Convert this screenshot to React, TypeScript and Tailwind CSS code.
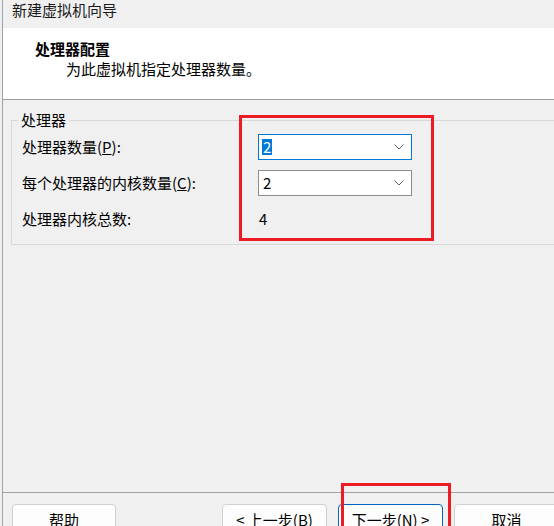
import React from "react";

const font = { fontFamily: '"Noto Sans CJK SC", "Noto Sans", sans-serif' };

function Chevron() {
  return (
    <svg width="10" height="6" viewBox="0 0 10 6" className="shrink-0">
      <polyline points="0.5,0.5 5,5 9.5,0.5" fill="none" stroke="#606060" strokeWidth="1" />
    </svg>
  );
}

function Combo({ focused }: { focused?: boolean }) {
  return (
    <div
      className={
        "flex h-[26px] w-[154px] items-center justify-between bg-white pl-[3px] pr-[7px] " +
        (focused ? "border border-[#0078d7]" : "border border-[#8c8c8c]")
      }
    >
      {focused ? (
        <span className="bg-[#0078d7] px-[1px] leading-[16px] text-white">2</span>
      ) : (
        <span className="px-[1px] leading-[16px] text-black">2</span>
      )}
      <Chevron />
    </div>
  );
}

function Btn({ children, primary, w = "w-[105px]" }: { children: React.ReactNode; primary?: boolean; w?: string }) {
  return (
    <div
      className={
        "flex h-[32px] shrink-0 items-center justify-center rounded-[4px] bg-[#fdfdfd] text-black " +
        w +
        (primary ? " border border-[#0067c0]" : " border border-[#d0d0d0]")
      }
    >
      {children}
    </div>
  );
}

export default function App() {
  return (
    <div className="relative h-[526px] w-[554px] overflow-hidden bg-[#f0f0f0] pl-[2px] text-[15px] text-black" style={font}>
      <div className="flex h-full flex-col border-l border-[#a0a0a0]">
        <div className="h-[28px] shrink-0 pl-[9px] leading-[20px] text-[#1a1a1a]">新建虚拟机向导</div>
        <div className="h-[72px] shrink-0 border-b border-[#a0a0a0] bg-white pt-[11px]">
          <div className="pl-[32px] font-bold leading-[20px]">处理器配置</div>
          <div className="pl-[63px] leading-[20px]">为此虚拟机指定处理器数量。</div>
        </div>
        <div className="relative ml-[8px] mt-[20px] h-[125px] w-[600px] shrink-0 border border-[#d9d9d9]">
          <div className="absolute left-[6px] top-[-11px] bg-[#f0f0f0] px-[3px] leading-[20px]">处理器</div>
          <div className="flex flex-col gap-[10px] pl-[10px] pt-[13px]">
            <div className="flex h-[26px] items-center">
              <div className="w-[236px]">
                处理器数量(<span className="underline">P</span>):
              </div>
              <Combo focused />
            </div>
            <div className="flex h-[26px] items-center">
              <div className="w-[236px]">
                每个处理器的内核数量(<span className="underline">C</span>):
              </div>
              <Combo />
            </div>
            <div className="flex h-[26px] items-center">
              <div className="w-[236px]">处理器内核总数:</div>
              <div className="pl-[1px]">4</div>
            </div>
          </div>
        </div>
        <div className="flex-1" />
        <div className="h-[34px] shrink-0 border-t border-[#a0a0a0] pt-[11px]">
          <div className="flex items-start pl-[9px]">
            <Btn w="w-[104px]">帮助</Btn>
            <div className="w-[106px] shrink-0" />
            <Btn>
              &lt; 上一步(<span className="underline">B</span>)
            </Btn>
            <div className="w-[11px] shrink-0" />
            <Btn primary>
              下一步(<span className="underline">N</span>) &gt;
            </Btn>
            <div className="w-[11px] shrink-0" />
            <Btn>取消</Btn>
          </div>
        </div>
      </div>
      <div className="pointer-events-none absolute left-[239px] top-[115px] h-[126px] w-[195px] border-[3px] border-[#ed1c24]" />
      <div className="pointer-events-none absolute left-[341px] top-[483px] h-[60px] w-[110px] border-[3px] border-[#ed1c24]" />
    </div>
  );
}
